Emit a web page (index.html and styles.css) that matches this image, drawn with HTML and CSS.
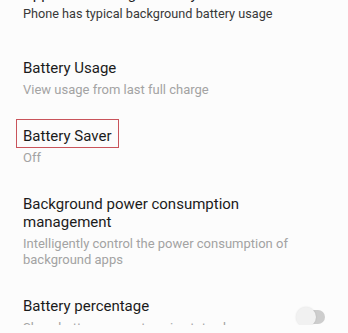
FILE: index.html
```html
<!DOCTYPE html>
<html lang="en">
<head>
    <meta charset="UTF-8">
    <meta name="viewport" content="width=device-width, initial-scale=1.0">
    <title>Battery</title>
    <link rel="stylesheet" href="styles.css">
</head>
<body>
    <div class="screen">
        <div class="settings-list">
            <div class="setting-item first">
                <div class="setting-text">
                    <div class="setting-title">Apps are running normally</div>
                    <div class="setting-summary dark">Phone has typical background battery usage</div>
                </div>
            </div>

            <div class="setting-item group-start">
                <div class="setting-text">
                    <div class="setting-title">Battery Usage</div>
                    <div class="setting-summary">View usage from last full charge</div>
                </div>
            </div>

            <div class="setting-item">
                <div class="setting-text">
                    <div class="setting-title"><span class="highlight">Battery Saver</span></div>
                    <div class="setting-summary">Off</div>
                </div>
            </div>

            <div class="setting-item">
                <div class="setting-text">
                    <div class="setting-title">Background power consumption management</div>
                    <div class="setting-summary">Intelligently control the power consumption of background apps</div>
                </div>
            </div>

            <div class="setting-item">
                <div class="setting-text">
                    <div class="setting-title">Battery percentage</div>
                    <div class="setting-summary">Show battery percentage in status bar</div>
                </div>
                <div class="switch">
                    <div class="switch-track"></div>
                    <div class="switch-thumb"></div>
                </div>
            </div>
        </div>
    </div>
</body>
</html>
```

FILE: styles.css
```css
:root {
    --bg-color: #fcfcfc;
    --title-color: #1b1b1b;
    --summary-color: #a3a3a3;
    --mark-color: #c9545b;
}

body {
    margin: 0;
    background-color: var(--bg-color);
    font-family: Roboto, 'Noto Sans', sans-serif;
    overflow: hidden;
}

/* visible part of the phone screen */
.screen {
    height: 325px;
    overflow: hidden;
}

.settings-list {
    margin-top: -30px;
}

.setting-item {
    display: flex;
    align-items: center;
    padding: 15px 23px 14px;
}

.setting-item.group-start {
    margin-top: 8px;
}

.setting-text {
    flex: 1;
    min-width: 0;
}

.setting-title {
    font-size: 15px;
    line-height: 18px;
    color: var(--title-color);
    padding-right: 40px;
}

.setting-summary {
    margin-top: 5px;
    font-size: 13px;
    line-height: 16px;
    color: var(--summary-color);
    padding-right: 10px;
}

.setting-summary.dark {
    margin-top: 3px;
    font-size: 12.7px;
    color: #383838;
}

.highlight {
    position: relative;
}

.highlight::after {
    content: '';
    position: absolute;
    top: -8px;
    left: -7px;
    right: -8px;
    bottom: -3px;
    border: 1.5px solid var(--mark-color);
}

.switch {
    position: relative;
    width: 29px;
    height: 20px;
    flex-shrink: 0;
}

.switch-track {
    position: absolute;
    top: 3px;
    right: 0;
    width: 22px;
    height: 14px;
    border-radius: 7px;
    background-color: #cdcdcd;
}

.switch-thumb {
    position: absolute;
    top: 0;
    left: 0;
    width: 20px;
    height: 20px;
    border-radius: 50%;
    background-color: #f1f1f1;
    box-shadow: 0 0 2px rgba(0,0,0,0.12);
}
```
